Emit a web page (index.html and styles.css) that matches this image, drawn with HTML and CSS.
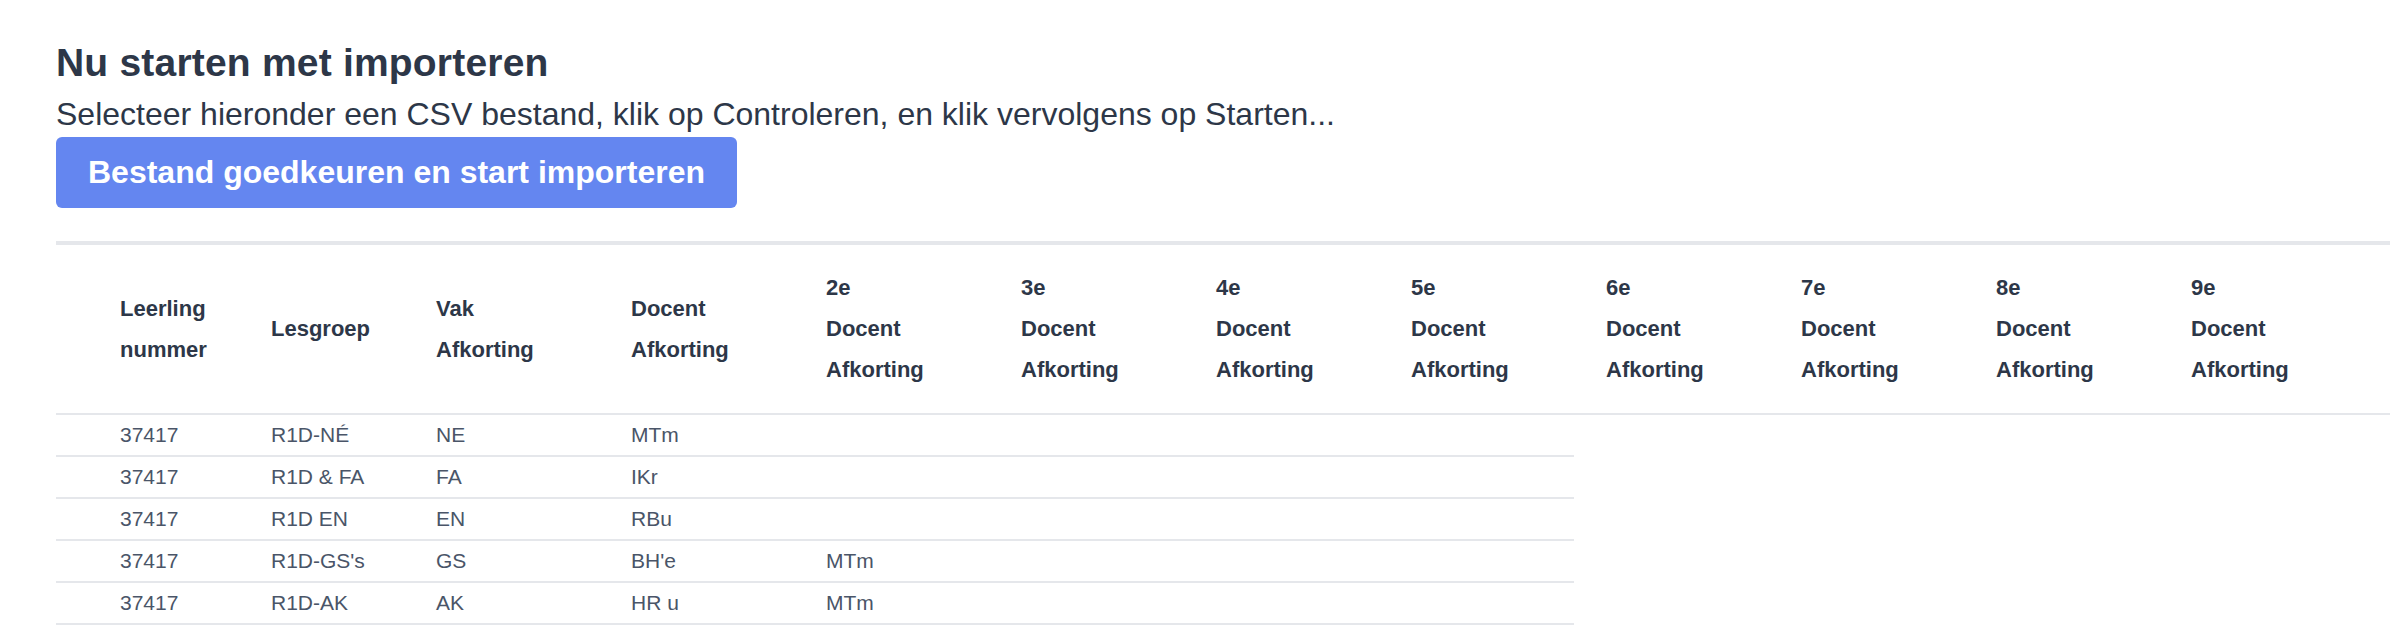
FILE: index.html
```html
<!DOCTYPE html>
<html lang="nl">
<head>
<meta charset="utf-8">
<title>Nu starten met importeren</title>
<link rel="stylesheet" href="styles.css">
</head>
<body>
<div class="page">
  <h1 class="title">Nu starten met importeren</h1>
  <p class="subtitle">Selecteer hieronder een CSV bestand, klik op Controleren, en klik vervolgens op Starten...</p>
  <button class="btn" type="button">Bestand goedkeuren en start importeren</button>

  <table class="grid">
    <colgroup>
      <col class="w-first">
      <col class="w-group">
      <col class="w-std">
      <col class="w-std">
      <col class="w-std">
      <col class="w-std">
      <col class="w-std">
      <col class="w-std">
      <col class="w-std">
      <col class="w-std">
      <col class="w-std">
      <col class="w-last">
    </colgroup>
    <thead>
      <tr>
        <th class="first">Leerling<br>nummer</th>
        <th>Lesgroep</th>
        <th>Vak<br>Afkorting</th>
        <th>Docent<br>Afkorting</th>
        <th>2e<br>Docent<br>Afkorting</th>
        <th>3e<br>Docent<br>Afkorting</th>
        <th>4e<br>Docent<br>Afkorting</th>
        <th>5e<br>Docent<br>Afkorting</th>
        <th>6e<br>Docent<br>Afkorting</th>
        <th>7e<br>Docent<br>Afkorting</th>
        <th>8e<br>Docent<br>Afkorting</th>
        <th>9e<br>Docent<br>Afkorting</th>
      </tr>
    </thead>
    <tbody>
      <tr>
        <td class="first">37417</td><td>R1D-NÉ</td><td>NE</td><td>MTm</td><td></td><td></td><td></td><td></td>
      </tr>
      <tr>
        <td class="first">37417</td><td>R1D &amp; FA</td><td>FA</td><td>IKr</td><td></td><td></td><td></td><td></td>
      </tr>
      <tr>
        <td class="first">37417</td><td>R1D EN</td><td>EN</td><td>RBu</td><td></td><td></td><td></td><td></td>
      </tr>
      <tr>
        <td class="first">37417</td><td>R1D-GS's</td><td>GS</td><td>BH'e</td><td>MTm</td><td></td><td></td><td></td>
      </tr>
      <tr>
        <td class="first">37417</td><td>R1D-AK</td><td>AK</td><td>HR u</td><td>MTm</td><td></td><td></td><td></td>
      </tr>
    </tbody>
  </table>
</div>
</body>
</html>
```
FILE: styles.css
```css
html, body {
  margin: 0;
  padding: 0;
  background: #ffffff;
}

body {
  font-family: "Liberation Sans", Arial, sans-serif;
  color: #2d3748;
  overflow: hidden;
}

.page {
  padding: 40px 0 0 56px;
}

.title {
  margin: 0;
  font-size: 39px;
  line-height: 45px;
  font-weight: 700;
  letter-spacing: 0.2px;
  color: #2d3748;
}

.subtitle {
  margin: 11px 0 0 0;
  font-size: 32px;
  line-height: 37px;
  color: #2d3748;
}

.btn {
  display: block;
  width: max-content;
  margin: 4px 0 0 0;
  border: 0;
  border-radius: 6px;
  background: #6486f0;
  color: #ffffff;
  font-family: "Liberation Sans", Arial, sans-serif;
  font-size: 32px;
  font-weight: 700;
  line-height: 35px;
  padding: 18px 32px;
  cursor: pointer;
}

.grid {
  margin-top: 33px;
  width: 2334px;
  table-layout: fixed;
  border-collapse: collapse;
  border-spacing: 0;
}

.w-first { width: 183px; }
.w-group { width: 165px; }
.w-std { width: 195px; }
.w-last { width: 231px; }

.grid th {
  text-align: left;
  vertical-align: middle;
  font-size: 22px;
  line-height: 41px;
  font-weight: 700;
  color: #2d3748;
  padding: 22px 32px 23px 32px;
  border-top: 4px solid #e5e7eb;
  border-bottom: 2px solid #e5e7eb;
}

.grid td {
  text-align: left;
  font-size: 21px;
  line-height: 24px;
  color: #4a5568;
  padding: 8px 32px;
  border-bottom: 2px solid #e5e7eb;
  white-space: nowrap;
}

.grid .first {
  padding-left: 64px;
}
```
